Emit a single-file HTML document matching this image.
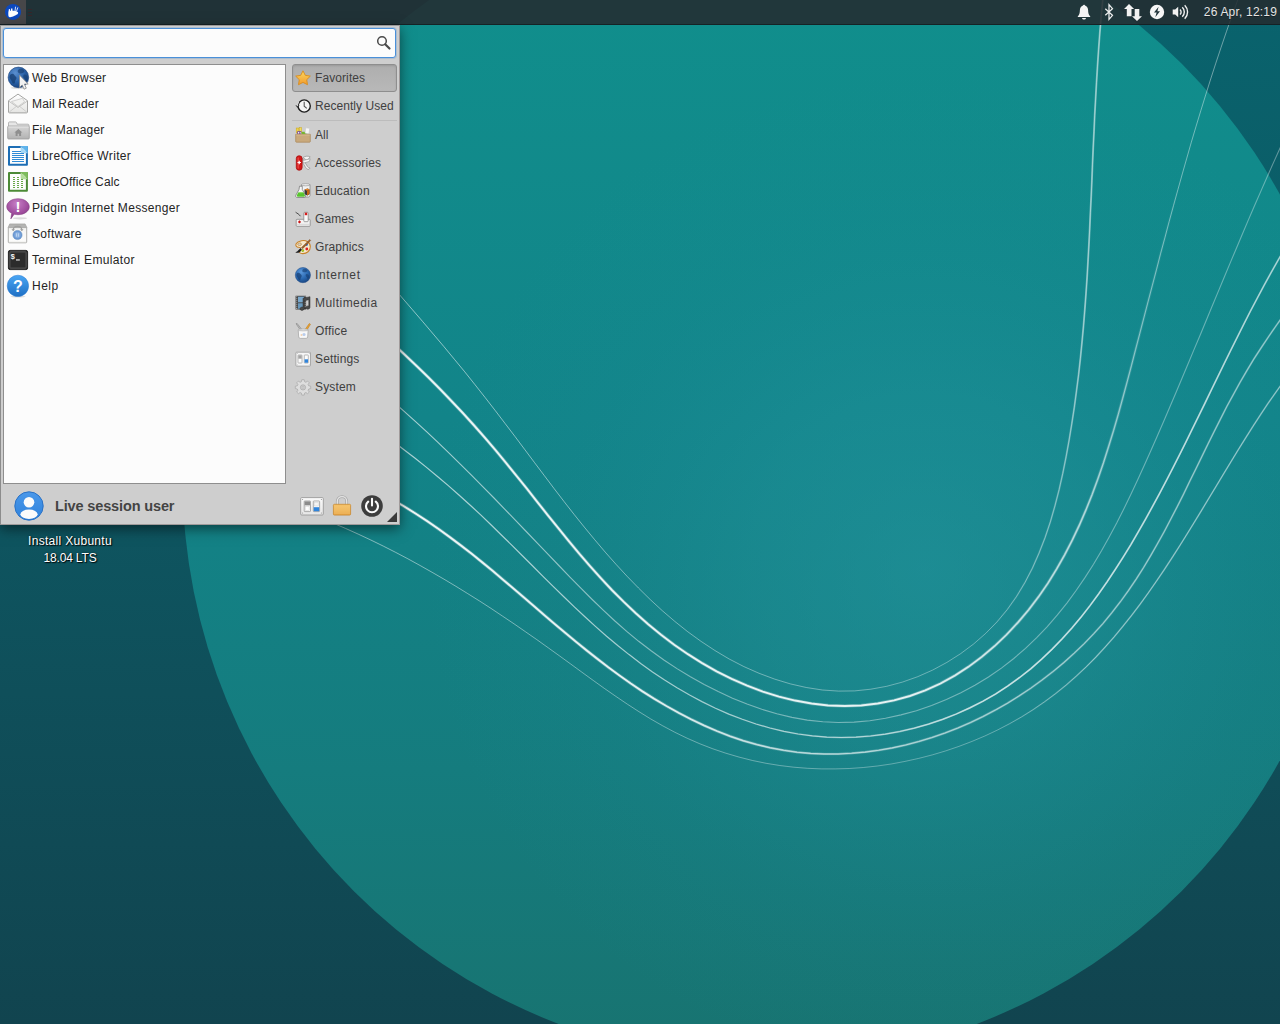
<!DOCTYPE html>
<html lang="en"><head><meta charset="utf-8"><title>Xubuntu Desktop</title>
<style>
html,body{margin:0;padding:0;}
body{width:1280px;height:1024px;overflow:hidden;position:relative;background:#0d5560;font-family:"Liberation Sans","DejaVu Sans",sans-serif;font-size:12px;color:#3c3c3c;}
#wall{position:absolute;left:0;top:0;}
.ic{position:absolute;overflow:visible;}
#panel{position:absolute;left:0;top:0;width:1280px;height:24px;background:rgba(36,43,47,0.87);border-bottom:1px solid rgba(20,30,34,0.85);}
#wbtn{position:absolute;left:0;top:0;width:26px;height:24px;background:#474749;}
#clock{position:absolute;right:3px;top:1px;height:24px;line-height:23px;text-shadow:0 1px 0 rgba(0,0,0,0.35);color:#e4e4e4;font-size:12px;letter-spacing:0.19px;white-space:nowrap;}
#menu{position:absolute;left:0;top:25px;width:398px;height:498px;background:#cecece;border:1px solid #a09a9a;border-top-color:#9a9a9a;border-left-color:#8c8c8c;box-shadow:0 4px 12px rgba(0,0,0,0.5);}
#search{position:absolute;left:3px;top:28px;width:391px;height:28px;background:#fcfcfc;border:1px solid #4a90d9;border-radius:3px;box-shadow:0 0 0 1px rgba(74,144,217,0.25);}
#list{position:absolute;left:3px;top:64px;width:281px;height:418px;background:#fcfcfc;border:1px solid #8e8e8e;}
.app{position:absolute;left:32px;height:26px;line-height:26px;white-space:nowrap;color:#242424;}
.cat{position:absolute;left:315px;height:28px;line-height:28px;white-space:nowrap;color:#404040;letter-spacing:0.1px;}
#fav{position:absolute;left:292px;top:64px;width:103px;height:26px;border:1px solid #8e8e8e;border-radius:3px;background:linear-gradient(#aeaeae,#b8b8b8);box-shadow:inset 0 1px 2px rgba(0,0,0,0.12);}
#sep{position:absolute;left:292px;top:120px;width:105px;height:1px;background:#bcbcbc;}
#user{position:absolute;left:55px;top:494px;height:24px;line-height:24px;font-weight:bold;font-size:14.5px;color:#444;white-space:nowrap;letter-spacing:-0.14px;}
.dl{position:absolute;left:0;width:140px;text-align:center;color:#fff;white-space:nowrap;text-shadow:1px 1px 1px rgba(0,0,0,0.9),0 0 2px rgba(0,0,0,0.6);}
</style></head><body>
<svg id="wall" width="1280" height="1024" viewBox="0 0 1280 1024">
<defs>
<linearGradient id="bgd" x1="0" y1="0" x2="0" y2="1"><stop offset="0" stop-color="#09636d"/><stop offset="0.5" stop-color="#0e5560"/><stop offset="1" stop-color="#11444f"/></linearGradient>
<linearGradient id="cg" x1="0" y1="0" x2="0" y2="1"><stop offset="0" stop-color="#10918d"/><stop offset="0.45" stop-color="#128489"/><stop offset="0.75" stop-color="#157c7e"/><stop offset="1" stop-color="#187370"/></linearGradient>
<radialGradient id="glow" gradientUnits="userSpaceOnUse" cx="925" cy="570" r="500"><stop offset="0" stop-color="#2a9ca8" stop-opacity="0.42"/><stop offset="0.35" stop-color="#2698a4" stop-opacity="0.30"/><stop offset="0.7" stop-color="#2090a0" stop-opacity="0.10"/><stop offset="1" stop-color="#1c8f9c" stop-opacity="0"/></radialGradient>
<linearGradient id="lg1_0" gradientUnits="userSpaceOnUse" x1="380" y1="0" x2="1280" y2="0"><stop offset="0.000" stop-color="#fff" stop-opacity="0.55"/><stop offset="0.356" stop-color="#fff" stop-opacity="0.4"/><stop offset="0.578" stop-color="#fff" stop-opacity="0.35"/><stop offset="1.000" stop-color="#fff" stop-opacity="0.4"/></linearGradient>
<linearGradient id="lg1_1" gradientUnits="userSpaceOnUse" x1="985" y1="0" x2="1110" y2="0"><stop offset="0.000" stop-color="#fff" stop-opacity="0"/><stop offset="0.600" stop-color="#fff" stop-opacity="0.2"/><stop offset="0.800" stop-color="#fff" stop-opacity="0.38"/><stop offset="1.000" stop-color="#fff" stop-opacity="0.38"/></linearGradient>
<linearGradient id="lg2_0" gradientUnits="userSpaceOnUse" x1="380" y1="0" x2="1280" y2="0"><stop offset="0.000" stop-color="#fff" stop-opacity="0.5"/><stop offset="1.000" stop-color="#fff" stop-opacity="0.4"/></linearGradient>
<linearGradient id="lg2_1" gradientUnits="userSpaceOnUse" x1="380" y1="0" x2="1180" y2="0"><stop offset="0.000" stop-color="#fff" stop-opacity="0.85"/><stop offset="0.650" stop-color="#fff" stop-opacity="0.8"/><stop offset="0.875" stop-color="#fff" stop-opacity="0.45"/><stop offset="0.950" stop-color="#fff" stop-opacity="0.12"/><stop offset="1.000" stop-color="#fff" stop-opacity="0"/></linearGradient>
<linearGradient id="lg2_2" gradientUnits="userSpaceOnUse" x1="380" y1="0" x2="1180" y2="0"><stop offset="0.000" stop-color="#fff" stop-opacity="0.25"/><stop offset="0.650" stop-color="#fff" stop-opacity="0.22"/><stop offset="0.875" stop-color="#fff" stop-opacity="0.1"/><stop offset="1.000" stop-color="#fff" stop-opacity="0"/></linearGradient>
<linearGradient id="lg3_0" gradientUnits="userSpaceOnUse" x1="380" y1="0" x2="1280" y2="0"><stop offset="0.000" stop-color="#fff" stop-opacity="0.65"/><stop offset="0.356" stop-color="#fff" stop-opacity="0.42"/><stop offset="1.000" stop-color="#fff" stop-opacity="0.35"/></linearGradient>
<linearGradient id="lg4_0" gradientUnits="userSpaceOnUse" x1="380" y1="0" x2="1280" y2="0"><stop offset="0.000" stop-color="#fff" stop-opacity="0.65"/><stop offset="1.000" stop-color="#fff" stop-opacity="0.5"/></linearGradient>
<linearGradient id="lg4_1" gradientUnits="userSpaceOnUse" x1="700" y1="0" x2="1280" y2="0"><stop offset="0.000" stop-color="#fff" stop-opacity="0"/><stop offset="0.345" stop-color="#fff" stop-opacity="0.3"/><stop offset="0.517" stop-color="#fff" stop-opacity="0.5"/><stop offset="0.862" stop-color="#fff" stop-opacity="0.45"/><stop offset="1.000" stop-color="#fff" stop-opacity="0.3"/></linearGradient>
<linearGradient id="lg5_0" gradientUnits="userSpaceOnUse" x1="380" y1="0" x2="1280" y2="0"><stop offset="0.000" stop-color="#fff" stop-opacity="0.55"/><stop offset="1.000" stop-color="#fff" stop-opacity="0.45"/></linearGradient>
<linearGradient id="lg5_1" gradientUnits="userSpaceOnUse" x1="380" y1="0" x2="1280" y2="0"><stop offset="0.000" stop-color="#fff" stop-opacity="0.85"/><stop offset="0.289" stop-color="#fff" stop-opacity="0.75"/><stop offset="0.467" stop-color="#fff" stop-opacity="0.4"/><stop offset="0.689" stop-color="#fff" stop-opacity="0.25"/><stop offset="0.800" stop-color="#fff" stop-opacity="0.18"/><stop offset="1.000" stop-color="#fff" stop-opacity="0.2"/></linearGradient>
<linearGradient id="lg5_2" gradientUnits="userSpaceOnUse" x1="380" y1="0" x2="1280" y2="0"><stop offset="0.000" stop-color="#fff" stop-opacity="0.25"/><stop offset="0.289" stop-color="#fff" stop-opacity="0.2"/><stop offset="0.467" stop-color="#fff" stop-opacity="0.05"/><stop offset="1.000" stop-color="#fff" stop-opacity="0"/></linearGradient>
<linearGradient id="lg6_0" gradientUnits="userSpaceOnUse" x1="320" y1="0" x2="1280" y2="0"><stop offset="0.000" stop-color="#fff" stop-opacity="0.55"/><stop offset="0.396" stop-color="#fff" stop-opacity="0.4"/><stop offset="0.604" stop-color="#fff" stop-opacity="0.35"/><stop offset="1.000" stop-color="#fff" stop-opacity="0.4"/></linearGradient>
<linearGradient id="lg6_1" gradientUnits="userSpaceOnUse" x1="1000" y1="0" x2="1280" y2="0"><stop offset="0.000" stop-color="#fff" stop-opacity="0"/><stop offset="0.357" stop-color="#fff" stop-opacity="0.3"/><stop offset="1.000" stop-color="#fff" stop-opacity="0.3"/></linearGradient>
</defs>
<rect width="1280" height="1024" fill="url(#bgd)"/>
<circle cx="767.7" cy="477.4" r="585.2" fill="url(#cg)"/>
<circle cx="767.7" cy="477.4" r="585.2" fill="url(#glow)"/>
<path d="M379.6,272.3 L390.5,284.5 L401.3,296.8 L412.0,309.2 L422.7,321.6 L433.3,334.1 L443.9,346.6 L454.4,359.3 L464.8,371.9 L475.0,384.7 L485.2,397.6 L495.2,410.5 L505.1,423.5 L515.0,436.5 L524.8,449.6 L534.6,462.7 L544.4,475.7 L554.2,488.7 L564.1,501.6 L574.1,514.4 L584.3,527.1 L594.7,539.7 L605.2,552.1 L616.0,564.3 L627.1,576.3 L638.5,588.0 L650.2,599.5 L662.3,610.7 L674.8,621.4 L687.7,631.7 L701.1,641.4 L714.9,650.5 L729.2,659.0 L743.9,666.6 L759.1,673.3 L774.6,679.1 L790.4,683.9 L806.3,687.5 L822.4,690.0 L838.6,691.1 L854.7,690.9 L870.8,689.2 L886.7,686.3 L902.4,682.1 L917.7,676.7 L932.6,670.1 L946.9,662.4 L960.6,653.7 L973.6,644.0 L985.7,633.4 L997.0,621.9 L1007.3,609.5 L1016.6,596.4 L1024.9,582.6 L1032.4,568.2 L1039.0,553.2 L1045.0,537.8 L1050.3,522.0 L1054.9,506.0 L1059.1,489.7 L1062.8,473.2 L1066.1,456.7 L1069.1,440.2 L1071.8,423.7 L1074.3,407.3 L1076.5,390.9 L1078.6,374.6 L1080.4,358.3 L1082.0,342.1 L1083.5,325.8 L1084.8,309.7 L1086.0,293.5 L1087.1,277.3 L1088.0,261.2 L1088.9,245.0 L1089.7,228.9 L1090.4,212.7 L1091.2,196.5 L1091.9,180.3 L1092.5,164.1 L1093.2,147.9 L1094.0,131.6 L1094.7,115.3 L1095.6,99.0 L1096.5,82.6 L1097.5,66.1 L1098.6,49.6 L1099.8,33.1 L1101.2,16.4 L1102.8,-0.3" fill="none" stroke="url(#lg1_0)" stroke-width="1.0"/>
<path d="M379.6,272.3 L390.5,284.5 L401.3,296.8 L412.0,309.2 L422.7,321.6 L433.3,334.1 L443.9,346.6 L454.4,359.3 L464.8,371.9 L475.0,384.7 L485.2,397.6 L495.2,410.5 L505.1,423.5 L515.0,436.5 L524.8,449.6 L534.6,462.7 L544.4,475.7 L554.2,488.7 L564.1,501.6 L574.1,514.4 L584.3,527.1 L594.7,539.7 L605.2,552.1 L616.0,564.3 L627.1,576.3 L638.5,588.0 L650.2,599.5 L662.3,610.7 L674.8,621.4 L687.7,631.7 L701.1,641.4 L714.9,650.5 L729.2,659.0 L743.9,666.6 L759.1,673.3 L774.6,679.1 L790.4,683.9 L806.3,687.5 L822.4,690.0 L838.6,691.1 L854.7,690.9 L870.8,689.2 L886.7,686.3 L902.4,682.1 L917.7,676.7 L932.6,670.1 L946.9,662.4 L960.6,653.7 L973.6,644.0 L985.7,633.4 L997.0,621.9 L1007.3,609.5 L1016.6,596.4 L1024.9,582.6 L1032.4,568.2 L1039.0,553.2 L1045.0,537.8 L1050.3,522.0 L1054.9,506.0 L1059.1,489.7 L1062.8,473.2 L1066.1,456.7 L1069.1,440.2 L1071.8,423.7 L1074.3,407.3 L1076.5,390.9 L1078.6,374.6 L1080.4,358.3 L1082.0,342.1 L1083.5,325.8 L1084.8,309.7 L1086.0,293.5 L1087.1,277.3 L1088.0,261.2 L1088.9,245.0 L1089.7,228.9 L1090.4,212.7 L1091.2,196.5 L1091.9,180.3 L1092.5,164.1 L1093.2,147.9 L1094.0,131.6 L1094.7,115.3 L1095.6,99.0 L1096.5,82.6 L1097.5,66.1 L1098.6,49.6 L1099.8,33.1 L1101.2,16.4 L1102.8,-0.3" fill="none" stroke="url(#lg1_1)" stroke-width="1.9"/>
<path d="M379.5,331.5 L391.8,342.7 L404.0,354.0 L416.1,365.4 L428.0,377.0 L439.7,388.8 L451.2,400.7 L462.6,412.8 L473.7,425.0 L484.7,437.5 L495.5,450.1 L506.0,462.9 L516.5,475.8 L526.9,488.7 L537.2,501.8 L547.5,514.8 L557.9,527.7 L568.4,540.6 L579.0,553.3 L589.8,565.8 L600.8,578.1 L612.1,590.2 L623.8,601.9 L635.8,613.3 L648.2,624.2 L661.0,634.7 L674.2,644.8 L687.9,654.2 L702.1,663.1 L716.6,671.4 L731.7,678.9 L747.1,685.6 L762.8,691.6 L778.9,696.6 L795.1,700.6 L811.6,703.6 L828.1,705.4 L844.7,706.0 L861.3,705.4 L877.7,703.5 L894.0,700.4 L909.9,696.0 L925.3,690.4 L940.3,683.6 L954.8,675.6 L968.6,666.7 L981.9,656.8 L994.6,646.1 L1006.6,634.6 L1017.9,622.5 L1028.6,609.9 L1038.6,596.7 L1047.9,583.2 L1056.5,569.2 L1064.6,554.9 L1072.2,540.3 L1079.3,525.3 L1085.9,510.0 L1092.1,494.6 L1097.9,478.9 L1103.4,463.0 L1108.5,446.9 L1113.5,430.8 L1118.2,414.6 L1122.7,398.3 L1127.1,382.0 L1131.4,365.8 L1135.6,349.5 L1139.8,333.4 L1144.0,317.3 L1148.2,301.2 L1152.4,285.2 L1156.6,269.2 L1160.7,253.2 L1165.0,237.3 L1169.2,221.4 L1173.5,205.6 L1177.9,189.7 L1182.3,173.9 L1186.8,158.1 L1191.3,142.3 L1196.0,126.5 L1200.8,110.7 L1205.7,94.9 L1210.7,79.0 L1215.8,63.2 L1221.1,47.3 L1226.5,31.4 L1232.1,15.5 L1237.9,-0.4" fill="none" stroke="url(#lg2_0)" stroke-width="1.0"/>
<path d="M379.5,331.5 L391.8,342.7 L404.0,354.0 L416.1,365.4 L428.0,377.0 L439.7,388.8 L451.2,400.7 L462.6,412.8 L473.7,425.0 L484.7,437.5 L495.5,450.1 L506.0,462.9 L516.5,475.8 L526.9,488.7 L537.2,501.8 L547.5,514.8 L557.9,527.7 L568.4,540.6 L579.0,553.3 L589.8,565.8 L600.8,578.1 L612.1,590.2 L623.8,601.9 L635.8,613.3 L648.2,624.2 L661.0,634.7 L674.2,644.8 L687.9,654.2 L702.1,663.1 L716.6,671.4 L731.7,678.9 L747.1,685.6 L762.8,691.6 L778.9,696.6 L795.1,700.6 L811.6,703.6 L828.1,705.4 L844.7,706.0 L861.3,705.4 L877.7,703.5 L894.0,700.4 L909.9,696.0 L925.3,690.4 L940.3,683.6 L954.8,675.6 L968.6,666.7 L981.9,656.8 L994.6,646.1 L1006.6,634.6 L1017.9,622.5 L1028.6,609.9 L1038.6,596.7 L1047.9,583.2 L1056.5,569.2 L1064.6,554.9 L1072.2,540.3 L1079.3,525.3 L1085.9,510.0 L1092.1,494.6 L1097.9,478.9 L1103.4,463.0 L1108.5,446.9 L1113.5,430.8 L1118.2,414.6 L1122.7,398.3 L1127.1,382.0 L1131.4,365.8 L1135.6,349.5 L1139.8,333.4 L1144.0,317.3 L1148.2,301.2 L1152.4,285.2 L1156.6,269.2 L1160.7,253.2 L1165.0,237.3 L1169.2,221.4 L1173.5,205.6 L1177.9,189.7 L1182.3,173.9 L1186.8,158.1 L1191.3,142.3 L1196.0,126.5 L1200.8,110.7 L1205.7,94.9 L1210.7,79.0 L1215.8,63.2 L1221.1,47.3 L1226.5,31.4 L1232.1,15.5 L1237.9,-0.4" fill="none" stroke="url(#lg2_1)" stroke-width="2.0"/>
<path d="M379.5,331.5 L391.8,342.7 L404.0,354.0 L416.1,365.4 L428.0,377.0 L439.7,388.8 L451.2,400.7 L462.6,412.8 L473.7,425.0 L484.7,437.5 L495.5,450.1 L506.0,462.9 L516.5,475.8 L526.9,488.7 L537.2,501.8 L547.5,514.8 L557.9,527.7 L568.4,540.6 L579.0,553.3 L589.8,565.8 L600.8,578.1 L612.1,590.2 L623.8,601.9 L635.8,613.3 L648.2,624.2 L661.0,634.7 L674.2,644.8 L687.9,654.2 L702.1,663.1 L716.6,671.4 L731.7,678.9 L747.1,685.6 L762.8,691.6 L778.9,696.6 L795.1,700.6 L811.6,703.6 L828.1,705.4 L844.7,706.0 L861.3,705.4 L877.7,703.5 L894.0,700.4 L909.9,696.0 L925.3,690.4 L940.3,683.6 L954.8,675.6 L968.6,666.7 L981.9,656.8 L994.6,646.1 L1006.6,634.6 L1017.9,622.5 L1028.6,609.9 L1038.6,596.7 L1047.9,583.2 L1056.5,569.2 L1064.6,554.9 L1072.2,540.3 L1079.3,525.3 L1085.9,510.0 L1092.1,494.6 L1097.9,478.9 L1103.4,463.0 L1108.5,446.9 L1113.5,430.8 L1118.2,414.6 L1122.7,398.3 L1127.1,382.0 L1131.4,365.8 L1135.6,349.5 L1139.8,333.4 L1144.0,317.3 L1148.2,301.2 L1152.4,285.2 L1156.6,269.2 L1160.7,253.2 L1165.0,237.3 L1169.2,221.4 L1173.5,205.6 L1177.9,189.7 L1182.3,173.9 L1186.8,158.1 L1191.3,142.3 L1196.0,126.5 L1200.8,110.7 L1205.7,94.9 L1210.7,79.0 L1215.8,63.2 L1221.1,47.3 L1226.5,31.4 L1232.1,15.5 L1237.9,-0.4" fill="none" stroke="url(#lg2_2)" stroke-width="3.4"/>
<path d="M379.9,390.1 L391.8,400.4 L403.6,410.8 L415.3,421.3 L426.8,431.9 L438.2,442.7 L449.6,453.6 L460.8,464.6 L471.9,475.7 L483.0,486.8 L494.0,498.0 L504.9,509.3 L515.8,520.6 L526.7,532.0 L537.6,543.3 L548.4,554.6 L559.3,566.0 L570.2,577.3 L581.1,588.4 L592.2,599.5 L603.5,610.4 L614.9,621.0 L626.7,631.3 L638.7,641.3 L651.1,650.8 L663.9,660.0 L677.0,668.6 L690.4,676.8 L704.2,684.5 L718.2,691.6 L732.5,698.2 L747.0,704.1 L761.8,709.3 L776.8,713.8 L792.0,717.4 L807.3,720.1 L822.8,721.8 L838.4,722.5 L854.1,722.1 L869.8,720.7 L885.5,718.3 L901.0,714.9 L916.4,710.7 L931.6,705.5 L946.4,699.5 L960.9,692.7 L974.9,685.2 L988.5,677.0 L1001.4,668.1 L1013.8,658.5 L1025.5,648.4 L1036.7,637.7 L1047.3,626.6 L1057.4,614.9 L1067.1,602.8 L1076.3,590.3 L1085.1,577.4 L1093.5,564.2 L1101.5,550.7 L1109.2,536.9 L1116.7,523.0 L1123.9,508.8 L1130.8,494.5 L1137.6,480.1 L1144.2,465.6 L1150.7,451.0 L1157.1,436.5 L1163.4,422.0 L1169.6,407.5 L1175.8,393.0 L1181.9,378.5 L1188.0,364.0 L1194.0,349.6 L1200.1,335.2 L1206.1,320.7 L1212.1,306.3 L1218.1,291.9 L1224.1,277.5 L1230.1,263.1 L1236.2,248.7 L1242.3,234.3 L1248.4,219.9 L1254.6,205.5 L1260.9,191.1 L1267.2,176.7 L1273.6,162.4 L1280.1,148.0 L1286.7,133.6 L1293.4,119.2 L1300.3,104.8" fill="none" stroke="url(#lg3_0)" stroke-width="1.1"/>
<path d="M379.7,431.3 L391.4,440.0 L403.0,448.9 L414.5,457.8 L425.9,466.9 L437.2,476.2 L448.3,485.6 L459.2,495.2 L470.0,505.0 L480.7,514.9 L491.2,525.0 L501.6,535.2 L512.0,545.4 L522.4,555.7 L532.7,566.0 L543.0,576.3 L553.4,586.6 L563.8,596.8 L574.3,606.9 L584.9,616.8 L595.7,626.6 L606.6,636.2 L617.7,645.5 L629.1,654.6 L640.7,663.4 L652.5,671.9 L664.6,680.0 L677.0,687.8 L689.6,695.1 L702.4,701.9 L715.5,708.3 L728.8,714.1 L742.3,719.3 L756.0,724.0 L769.9,728.0 L783.9,731.3 L798.1,734.0 L812.4,735.9 L826.8,737.1 L841.4,737.5 L856.0,737.2 L870.6,736.0 L885.3,734.1 L899.8,731.5 L914.3,728.1 L928.5,724.1 L942.6,719.4 L956.3,714.0 L969.8,707.9 L982.9,701.3 L995.6,694.0 L1007.8,686.1 L1019.5,677.6 L1030.8,668.7 L1041.6,659.2 L1052.1,649.2 L1062.1,638.9 L1071.8,628.1 L1081.1,617.0 L1090.1,605.5 L1098.7,593.8 L1107.1,581.8 L1115.2,569.6 L1123.1,557.2 L1130.8,544.7 L1138.2,532.0 L1145.5,519.3 L1152.5,506.5 L1159.5,493.6 L1166.3,480.7 L1173.0,467.7 L1179.6,454.7 L1186.1,441.7 L1192.5,428.6 L1198.9,415.6 L1205.3,402.5 L1211.6,389.4 L1218.0,376.3 L1224.4,363.2 L1230.8,350.2 L1237.3,337.2 L1243.8,324.2 L1250.4,311.2 L1257.2,298.3 L1264.0,285.5 L1271.0,272.7 L1278.2,260.0 L1285.5,247.3 L1293.0,234.8 L1300.8,222.3" fill="none" stroke="url(#lg4_0)" stroke-width="1.2"/>
<path d="M379.7,431.3 L391.4,440.0 L403.0,448.9 L414.5,457.8 L425.9,466.9 L437.2,476.2 L448.3,485.6 L459.2,495.2 L470.0,505.0 L480.7,514.9 L491.2,525.0 L501.6,535.2 L512.0,545.4 L522.4,555.7 L532.7,566.0 L543.0,576.3 L553.4,586.6 L563.8,596.8 L574.3,606.9 L584.9,616.8 L595.7,626.6 L606.6,636.2 L617.7,645.5 L629.1,654.6 L640.7,663.4 L652.5,671.9 L664.6,680.0 L677.0,687.8 L689.6,695.1 L702.4,701.9 L715.5,708.3 L728.8,714.1 L742.3,719.3 L756.0,724.0 L769.9,728.0 L783.9,731.3 L798.1,734.0 L812.4,735.9 L826.8,737.1 L841.4,737.5 L856.0,737.2 L870.6,736.0 L885.3,734.1 L899.8,731.5 L914.3,728.1 L928.5,724.1 L942.6,719.4 L956.3,714.0 L969.8,707.9 L982.9,701.3 L995.6,694.0 L1007.8,686.1 L1019.5,677.6 L1030.8,668.7 L1041.6,659.2 L1052.1,649.2 L1062.1,638.9 L1071.8,628.1 L1081.1,617.0 L1090.1,605.5 L1098.7,593.8 L1107.1,581.8 L1115.2,569.6 L1123.1,557.2 L1130.8,544.7 L1138.2,532.0 L1145.5,519.3 L1152.5,506.5 L1159.5,493.6 L1166.3,480.7 L1173.0,467.7 L1179.6,454.7 L1186.1,441.7 L1192.5,428.6 L1198.9,415.6 L1205.3,402.5 L1211.6,389.4 L1218.0,376.3 L1224.4,363.2 L1230.8,350.2 L1237.3,337.2 L1243.8,324.2 L1250.4,311.2 L1257.2,298.3 L1264.0,285.5 L1271.0,272.7 L1278.2,260.0 L1285.5,247.3 L1293.0,234.8 L1300.8,222.3" fill="none" stroke="url(#lg4_1)" stroke-width="1.8"/>
<path d="M378.6,492.1 L391.2,498.9 L403.5,506.0 L415.5,513.5 L427.2,521.1 L438.6,529.0 L449.8,537.1 L460.8,545.4 L471.7,553.8 L482.3,562.4 L492.9,571.1 L503.3,579.9 L513.7,588.7 L524.0,597.6 L534.4,606.5 L544.7,615.4 L555.0,624.3 L565.5,633.1 L576.0,641.8 L586.6,650.4 L597.4,658.9 L608.3,667.3 L619.5,675.5 L630.8,683.5 L642.4,691.3 L654.3,698.8 L666.4,706.0 L678.8,712.9 L691.3,719.4 L704.1,725.5 L717.0,731.1 L730.1,736.2 L743.3,740.7 L756.6,744.5 L770.1,747.8 L783.6,750.3 L797.1,752.2 L810.7,753.4 L824.3,754.0 L838.0,754.0 L851.6,753.3 L865.2,752.1 L878.7,750.3 L892.2,747.9 L905.6,745.0 L918.8,741.5 L932.0,737.5 L945.0,733.0 L957.9,728.0 L970.6,722.5 L983.1,716.5 L995.4,710.0 L1007.5,703.2 L1019.3,695.8 L1030.9,688.1 L1042.2,679.9 L1053.2,671.4 L1063.9,662.5 L1074.2,653.2 L1084.2,643.6 L1093.8,633.6 L1103.1,623.3 L1111.9,612.7 L1120.4,601.7 L1128.4,590.6 L1136.2,579.1 L1143.6,567.5 L1150.7,555.6 L1157.6,543.6 L1164.3,531.4 L1170.8,519.1 L1177.2,506.7 L1183.5,494.2 L1189.6,481.6 L1195.8,469.1 L1201.9,456.5 L1208.0,443.9 L1214.2,431.4 L1220.5,419.0 L1226.8,406.6 L1233.4,394.4 L1240.1,382.3 L1247.0,370.4 L1254.1,358.6 L1261.6,347.1 L1269.2,335.7 L1277.0,324.5 L1285.0,313.3 L1293.1,302.1 L1301.1,291.0" fill="none" stroke="url(#lg5_0)" stroke-width="1.1"/>
<path d="M378.6,492.1 L391.2,498.9 L403.5,506.0 L415.5,513.5 L427.2,521.1 L438.6,529.0 L449.8,537.1 L460.8,545.4 L471.7,553.8 L482.3,562.4 L492.9,571.1 L503.3,579.9 L513.7,588.7 L524.0,597.6 L534.4,606.5 L544.7,615.4 L555.0,624.3 L565.5,633.1 L576.0,641.8 L586.6,650.4 L597.4,658.9 L608.3,667.3 L619.5,675.5 L630.8,683.5 L642.4,691.3 L654.3,698.8 L666.4,706.0 L678.8,712.9 L691.3,719.4 L704.1,725.5 L717.0,731.1 L730.1,736.2 L743.3,740.7 L756.6,744.5 L770.1,747.8 L783.6,750.3 L797.1,752.2 L810.7,753.4 L824.3,754.0 L838.0,754.0 L851.6,753.3 L865.2,752.1 L878.7,750.3 L892.2,747.9 L905.6,745.0 L918.8,741.5 L932.0,737.5 L945.0,733.0 L957.9,728.0 L970.6,722.5 L983.1,716.5 L995.4,710.0 L1007.5,703.2 L1019.3,695.8 L1030.9,688.1 L1042.2,679.9 L1053.2,671.4 L1063.9,662.5 L1074.2,653.2 L1084.2,643.6 L1093.8,633.6 L1103.1,623.3 L1111.9,612.7 L1120.4,601.7 L1128.4,590.6 L1136.2,579.1 L1143.6,567.5 L1150.7,555.6 L1157.6,543.6 L1164.3,531.4 L1170.8,519.1 L1177.2,506.7 L1183.5,494.2 L1189.6,481.6 L1195.8,469.1 L1201.9,456.5 L1208.0,443.9 L1214.2,431.4 L1220.5,419.0 L1226.8,406.6 L1233.4,394.4 L1240.1,382.3 L1247.0,370.4 L1254.1,358.6 L1261.6,347.1 L1269.2,335.7 L1277.0,324.5 L1285.0,313.3 L1293.1,302.1 L1301.1,291.0" fill="none" stroke="url(#lg5_1)" stroke-width="2.0"/>
<path d="M378.6,492.1 L391.2,498.9 L403.5,506.0 L415.5,513.5 L427.2,521.1 L438.6,529.0 L449.8,537.1 L460.8,545.4 L471.7,553.8 L482.3,562.4 L492.9,571.1 L503.3,579.9 L513.7,588.7 L524.0,597.6 L534.4,606.5 L544.7,615.4 L555.0,624.3 L565.5,633.1 L576.0,641.8 L586.6,650.4 L597.4,658.9 L608.3,667.3 L619.5,675.5 L630.8,683.5 L642.4,691.3 L654.3,698.8 L666.4,706.0 L678.8,712.9 L691.3,719.4 L704.1,725.5 L717.0,731.1 L730.1,736.2 L743.3,740.7 L756.6,744.5 L770.1,747.8 L783.6,750.3 L797.1,752.2 L810.7,753.4 L824.3,754.0 L838.0,754.0 L851.6,753.3 L865.2,752.1 L878.7,750.3 L892.2,747.9 L905.6,745.0 L918.8,741.5 L932.0,737.5 L945.0,733.0 L957.9,728.0 L970.6,722.5 L983.1,716.5 L995.4,710.0 L1007.5,703.2 L1019.3,695.8 L1030.9,688.1 L1042.2,679.9 L1053.2,671.4 L1063.9,662.5 L1074.2,653.2 L1084.2,643.6 L1093.8,633.6 L1103.1,623.3 L1111.9,612.7 L1120.4,601.7 L1128.4,590.6 L1136.2,579.1 L1143.6,567.5 L1150.7,555.6 L1157.6,543.6 L1164.3,531.4 L1170.8,519.1 L1177.2,506.7 L1183.5,494.2 L1189.6,481.6 L1195.8,469.1 L1201.9,456.5 L1208.0,443.9 L1214.2,431.4 L1220.5,419.0 L1226.8,406.6 L1233.4,394.4 L1240.1,382.3 L1247.0,370.4 L1254.1,358.6 L1261.6,347.1 L1269.2,335.7 L1277.0,324.5 L1285.0,313.3 L1293.1,302.1 L1301.1,291.0" fill="none" stroke="url(#lg5_2)" stroke-width="3.4"/>
<path d="M319.6,517.6 L332.6,522.9 L345.5,528.4 L358.2,534.1 L370.8,540.0 L383.3,546.1 L395.7,552.4 L407.9,558.8 L420.1,565.5 L432.1,572.3 L444.0,579.2 L455.9,586.3 L467.7,593.6 L479.4,600.9 L491.0,608.4 L502.5,616.1 L514.0,623.8 L525.4,631.7 L536.8,639.6 L548.1,647.7 L559.4,655.8 L570.7,664.0 L581.9,672.2 L593.2,680.4 L604.5,688.5 L615.9,696.4 L627.4,704.2 L639.0,711.7 L650.8,719.0 L662.7,725.8 L674.9,732.3 L687.3,738.3 L699.9,743.8 L712.8,748.8 L725.8,753.2 L739.1,757.1 L752.5,760.5 L766.1,763.3 L779.8,765.5 L793.6,767.2 L807.5,768.3 L821.4,768.9 L835.4,768.9 L849.4,768.5 L863.4,767.5 L877.4,766.0 L891.2,764.0 L905.0,761.4 L918.7,758.4 L932.3,754.9 L945.7,750.9 L958.9,746.4 L972.0,741.4 L984.8,736.0 L997.3,730.1 L1009.6,723.7 L1021.6,716.9 L1033.2,709.6 L1044.5,701.8 L1055.5,693.7 L1066.1,685.1 L1076.3,676.1 L1086.3,666.8 L1095.9,657.1 L1105.2,647.0 L1114.3,636.7 L1123.1,626.1 L1131.7,615.3 L1140.1,604.2 L1148.3,592.9 L1156.3,581.4 L1164.2,569.8 L1171.9,558.0 L1179.5,546.1 L1187.0,534.1 L1194.4,522.1 L1201.8,510.0 L1209.1,497.9 L1216.4,485.8 L1223.6,473.8 L1230.9,461.8 L1238.2,449.8 L1245.6,438.0 L1253.0,426.3 L1260.5,414.7 L1268.1,403.3 L1275.9,392.2 L1283.8,381.2 L1291.8,370.5 L1300.0,360.0" fill="none" stroke="url(#lg6_0)" stroke-width="0.9"/>
<path d="M319.6,517.6 L332.6,522.9 L345.5,528.4 L358.2,534.1 L370.8,540.0 L383.3,546.1 L395.7,552.4 L407.9,558.8 L420.1,565.5 L432.1,572.3 L444.0,579.2 L455.9,586.3 L467.7,593.6 L479.4,600.9 L491.0,608.4 L502.5,616.1 L514.0,623.8 L525.4,631.7 L536.8,639.6 L548.1,647.7 L559.4,655.8 L570.7,664.0 L581.9,672.2 L593.2,680.4 L604.5,688.5 L615.9,696.4 L627.4,704.2 L639.0,711.7 L650.8,719.0 L662.7,725.8 L674.9,732.3 L687.3,738.3 L699.9,743.8 L712.8,748.8 L725.8,753.2 L739.1,757.1 L752.5,760.5 L766.1,763.3 L779.8,765.5 L793.6,767.2 L807.5,768.3 L821.4,768.9 L835.4,768.9 L849.4,768.5 L863.4,767.5 L877.4,766.0 L891.2,764.0 L905.0,761.4 L918.7,758.4 L932.3,754.9 L945.7,750.9 L958.9,746.4 L972.0,741.4 L984.8,736.0 L997.3,730.1 L1009.6,723.7 L1021.6,716.9 L1033.2,709.6 L1044.5,701.8 L1055.5,693.7 L1066.1,685.1 L1076.3,676.1 L1086.3,666.8 L1095.9,657.1 L1105.2,647.0 L1114.3,636.7 L1123.1,626.1 L1131.7,615.3 L1140.1,604.2 L1148.3,592.9 L1156.3,581.4 L1164.2,569.8 L1171.9,558.0 L1179.5,546.1 L1187.0,534.1 L1194.4,522.1 L1201.8,510.0 L1209.1,497.9 L1216.4,485.8 L1223.6,473.8 L1230.9,461.8 L1238.2,449.8 L1245.6,438.0 L1253.0,426.3 L1260.5,414.7 L1268.1,403.3 L1275.9,392.2 L1283.8,381.2 L1291.8,370.5 L1300.0,360.0" fill="none" stroke="url(#lg6_1)" stroke-width="1.6"/>

</svg>
<div id="panel"></div>
<div id="wbtn"></div>
<svg class="ic" style="left:4px;top:3px" width="18" height="18" viewBox="0 0 18 18">
<circle cx="9" cy="8.950" r="8" fill="#0c48be"/>
<path d="M4.300 10C4.300 8.500 4.900 7.800 4.800 6.300L5.900 6 6.300 8.100 6.900 7.800 7.200 5.400 8.200 5.200 8.700 7.900C10 7.600 11.500 7.800 12.500 8.300 13.600 8.800 14.300 9.400 14.100 10.200 13.700 11.500 11.500 12.300 10 13 8.500 13.700 6.500 14.600 5.200 14 4.200 13.500 4.300 11.500 4.300 10Z" fill="#fff"/>
<path d="M11.100 7.600L11.500 4.100M12.700 7.800L13.700 4.800" stroke="#e8f0ff" stroke-width="0.900" stroke-linecap="round"/>
</svg>
<svg class="ic" style="left:28px;top:9px" width="4" height="9" viewBox="0 0 4 9"><rect x="0" y="0" width="4" height="1" fill="#36262a"/><rect x="0" y="3" width="4" height="1" fill="#36262a"/><rect x="0" y="6" width="4" height="1" fill="#36262a"/></svg>
<svg class="ic" style="left:1076px;top:4px" width="16" height="16" viewBox="0 0 16 16">
<path d="M8 .7c.6 0 1 .4 1 .9 2 .6 3 2.300 3.100 4.400 0 3 .6 5 2.100 6.300v.7H1.800v-.7C3.300 11 3.900 9 3.900 6c.1-2.100 1.100-3.800 3.100-4.400 0-.5.400-.9 1-.9z" fill="#f4f4f4"/>
<path d="M6 14h4c-.2 1-1 1.600-2 1.600S6.200 15 6 14z" fill="#f4f4f4"/>
</svg>
<svg class="ic" style="left:1101px;top:4px" width="16" height="16" viewBox="0 0 16 16">
<path d="M4.300 4.700l7.200 6.600L8 15.300V.7l3.500 4-7.200 6.600" fill="none" stroke="#f0f0f0" stroke-width="1.250" stroke-linejoin="miter"/>
</svg>
<svg class="ic" style="left:1124px;top:4px" width="18" height="18" viewBox="0 0 18 18">
<path d="M5 0l5.100 5H7.500v7.200H2.800V5H0z" fill="#f2f2f2"/>
<path d="M13 17.100l-5-4.900h2.700V5h4.600v7.200H18z" fill="#f2f2f2"/>
</svg>
<svg class="ic" style="left:1149px;top:4px" width="16" height="16" viewBox="0 0 16 16">
<circle cx="8" cy="8" r="7.200" fill="#f6f6f6"/>
<path d="M9.600 2.800L5 8.600h2.600L6.300 13.200 11 7.300H8.400z" fill="#22343a"/>
</svg>
<svg class="ic" style="left:1172px;top:4px" width="17" height="17" viewBox="0 0 17 17">
<path d="M.7 5.600h2.500L6.200 2.800v10.400L3.200 10.400H.7z" fill="#f2f2f2"/>
<path d="M8 5.400a3.600 3.600 0 0 1 0 5.200" fill="none" stroke="#f2f2f2" stroke-width="1.400"/>
<path d="M10.300 3.300a6.500 6.500 0 0 1 0 9.400" fill="none" stroke="#f2f2f2" stroke-width="1.400"/>
<path d="M12.700 1.200a9.500 9.500 0 0 1 0 13.600" fill="none" stroke="#f2f2f2" stroke-width="1.400"/>
</svg>
<div id="clock">26 Apr, 12:19</div>
<div id="menu"></div>
<div id="search"></div>
<svg class="ic" style="left:376px;top:35px" width="15" height="15" viewBox="0 0 15 15">
<circle cx="6" cy="6" r="4.300" fill="none" stroke="#4a4a4a" stroke-width="1.500"/>
<path d="M9.200 9.200l4.300 4.300" stroke="#4a4a4a" stroke-width="2.200" stroke-linecap="round"/>
</svg>
<div id="list"></div>
<svg class="ic" style="left:6px;top:66px" width="24" height="24" viewBox="0 0 24 24">
<defs><radialGradient id="gl0" cx="0.35" cy="0.28" r="0.8"><stop offset="0" stop-color="#5b8fcf"/><stop offset="0.55" stop-color="#2a62a8"/><stop offset="1" stop-color="#163f78"/></radialGradient></defs>
<ellipse cx="12.500" cy="21.800" rx="8" ry="1.300" fill="#000" opacity="0.120"/>
<circle cx="12.400" cy="11.400" r="10.300" fill="url(#gl0)" stroke="#1a4079" stroke-width="0.600"/>
<path d="M4.500 8.500c1.500-1 3-.8 3.800.5.600 1.200 2.200 1.500 2.200 3 0 1.500-1.500 2.200-1.500 3.800 0 1-.5 2-1.500 2-1.300-.6-1.500-2.200-2.200-3.400-.8-1.200-2-2.300-1.800-3.800.1-.9.400-1.600 1-2.100z" fill="#173d70" opacity="0.750"/>
<path d="M13 3.200c1.600-.8 3.800-.4 5 1 .8 1 .3 2.200-.8 2.500-1.300.300-2.200 1.200-3.500.8-1.200-.4-2.200-1.300-2-2.500.1-.8.600-1.400 1.300-1.800z" fill="#173d70" opacity="0.650"/>
<path d="M18.500 8.500c1.300-.2 2.700.8 3 2.200.3 1.700-.3 3.500-1.400 4.800-.8-.6-.6-1.800-1.200-2.600-.6-.9-1.700-1.400-1.700-2.500 0-.9.500-1.700 1.300-1.900z" fill="#173d70" opacity="0.600"/>
<path d="M13.500 9.100v12.400l2.700-2.500 1.900 4.200 2.200-1-1.900-4.100h3.800z" fill="#f2f2f2" stroke="#8a8a8a" stroke-width="0.800" stroke-linejoin="round"/>
</svg><div class="app" style="top:65px;letter-spacing:0.23px">Web Browser</div>
<svg class="ic" style="left:6px;top:92px" width="24" height="24" viewBox="0 0 24 24">
<defs><linearGradient id="ml1" x1="0" y1="0" x2="0" y2="1"><stop offset="0" stop-color="#ffffff"/><stop offset="1" stop-color="#e4e4e2"/></linearGradient></defs><g transform="translate(0,-1.5)">
<path d="M2.500 10.200L12 3.600l9.500 6.600v11.300c0 .5-.4.900-.9.900H3.400c-.5 0-.9-.4-.9-.9z" fill="url(#ml1)" stroke="#a4a4a2" stroke-width="1" stroke-linejoin="round"/>
<path d="M5.500 11l11-3.200 2 3.500-6.500 4.700z" fill="#f2f2f0" stroke="#c2c2c0" stroke-width="0.700" stroke-linejoin="round"/>
<path d="M3 10.800l9 6.200 9-6.200" fill="none" stroke="#bcbcba" stroke-width="0.900"/>
<path d="M3.200 21.600l7.300-5.800M20.800 21.600l-7.300-5.800" fill="none" stroke="#cacac8" stroke-width="0.900"/>
</g></svg><div class="app" style="top:91px;letter-spacing:0.2px">Mail Reader</div>
<svg class="ic" style="left:6px;top:118px" width="24" height="24" viewBox="0 0 24 24">
<defs><linearGradient id="fd2" x1="0" y1="0" x2="0" y2="1"><stop offset="0" stop-color="#d6d6d6"/><stop offset="1" stop-color="#b2b2b2"/></linearGradient></defs><g transform="translate(0,-1.3)">
<path d="M2.500 6.200c0-.6.400-1 1-1h6c.6 0 1 .4 1.200 1l.3 1.300h11c.5 0 1 .4 1 1V10H2.500z" fill="#e6e6e6" stroke="#a8a8a8" stroke-width="0.800"/>
<rect x="1.700" y="9.300" width="21.600" height="13" rx="1" fill="url(#fd2)" stroke="#9c9c9c" stroke-width="0.800"/>
<path d="M2.300 10.300h20.400" stroke="#ececec" stroke-width="0.800"/>
<path d="M12.400 12.200l4 3.600h-1.300v3.500h-2v-2.200h-1.500v2.200h-2v-3.500H8.400z" fill="#8f8f8f"/>
</g></svg><div class="app" style="top:117px;letter-spacing:0.21px">File Manager</div>
<svg class="ic" style="left:6px;top:144px" width="24" height="24" viewBox="0 0 24 24">
<rect x="3" y="2.900" width="17.900" height="17.900" fill="#fdfdfd" stroke="#1c6db4" stroke-width="2" stroke-linejoin="round"/>
<path d="M14.600 2h7.200v7.200z" fill="#5fb4ec"/>
<path d="M14.600 2l7.200 7.200h-5.700c-.8 0-1.500-.7-1.500-1.500z" fill="#a4d8f6"/>
<path d="M6 7.500h9M6 9.500h12M6 11.500h12M6 13.500h12M6 15.500h12M6 17.500h12" stroke="#2f8bd6" stroke-width="1"/>
</svg><div class="app" style="top:143px;letter-spacing:0.35px">LibreOffice Writer</div>
<svg class="ic" style="left:6px;top:170px" width="24" height="24" viewBox="0 0 24 24">
<rect x="3" y="2.900" width="17.900" height="17.900" fill="#fdfdfd" stroke="#4c8a36" stroke-width="2" stroke-linejoin="round"/>
<path d="M14.600 2h7.200v7.200z" fill="#7dbb5c"/>
<path d="M14.600 2l7.200 7.200h-5.700c-.8 0-1.500-.7-1.500-1.500z" fill="#b4dc9c"/>
<path d="M7 7.500h2M11 7.500h2M7 9.500h2M11 9.500h2M15 9.500h2M7 11.500h2M11 11.500h2M15 11.500h2M7 13.500h2M11 13.500h2M15 13.500h2M7 15.500h2M11 15.500h2M15 15.500h2M7 17.500h2M11 17.500h2M15 17.500h2" stroke="#6aa84a" stroke-width="1"/>
</svg><div class="app" style="top:169px;letter-spacing:0.16px">LibreOffice Calc</div>
<svg class="ic" style="left:6px;top:196px" width="24" height="24" viewBox="0 0 24 24">
<defs><radialGradient id="pg5" cx="0.45" cy="0.25" r="0.8"><stop offset="0" stop-color="#c77fc6"/><stop offset="0.6" stop-color="#a04e9e"/><stop offset="1" stop-color="#7c357c"/></radialGradient></defs>
<ellipse cx="14" cy="22.300" rx="7" ry="1.100" fill="#000" opacity="0.130"/>
<path d="M12 2.700c6.300 0 11.300 3.500 11.300 8s-5 8-11.300 8c-1.300 0-2.600-.2-3.800-.5L4.800 22.900l.9-5.700C2.800 15.800.7 13.400.7 10.700c0-4.500 5-8 11.300-8z" fill="url(#pg5)" stroke="#7a3379" stroke-width="0.500"/>
<text x="12.100" y="16" text-anchor="middle" font-family="Liberation Sans, DejaVu Sans, sans-serif" font-weight="bold" font-size="15" fill="#fff">!</text>
</svg><div class="app" style="top:195px;letter-spacing:0.32px">Pidgin Internet Messenger</div>
<svg class="ic" style="left:6px;top:222px" width="24" height="24" viewBox="0 0 24 24">
<defs><linearGradient id="sw6" x1="0" y1="0" x2="0" y2="1"><stop offset="0" stop-color="#f4f4f2"/><stop offset="1" stop-color="#fdfdfc"/></linearGradient></defs>
<path d="M3.700 1.900h15.400l1.900 3.900H2z" fill="#b4b4b2" stroke="#9a9a98" stroke-width="0.600" stroke-linejoin="round"/>
<path d="M2.300 5.600h18.400v14.500c0 .4-.3.700-.7.700H3c-.4 0-.7-.3-.7-.7z" fill="url(#sw6)" stroke="#a6a6a4" stroke-width="0.900"/>
<path d="M2.800 20.300h17.500" stroke="#d4d4d2" stroke-width="0.800"/>
<path d="M7.200 8.200c0-5 8.600-5 8.600 0" fill="none" stroke="#a0a09e" stroke-width="1.300"/>
<path d="M5.400 7.300l1.800 2 1.800-2zM14 7.300l1.800 2 1.800-2z" fill="#a0a09e"/>
<circle cx="11.500" cy="13" r="4.600" fill="#6c9ad4" stroke="#5b86bd" stroke-width="0.500"/>
<circle cx="11.500" cy="13" r="3" fill="#86aee0"/>
<rect x="10.100" y="11.600" width="1" height="1" fill="#e8f0fb"/><rect x="11.900" y="11.600" width="1" height="1" fill="#e8f0fb"/><rect x="10.100" y="13.400" width="1" height="1" fill="#e8f0fb"/><rect x="11.900" y="13.400" width="1" height="1" fill="#e8f0fb"/>
</svg><div class="app" style="top:221px;letter-spacing:0.31px">Software</div>
<svg class="ic" style="left:6px;top:248px" width="24" height="24" viewBox="0 0 24 24">
<rect x="2.400" y="2.400" width="19.200" height="19.200" rx="1.600" fill="#2c2c2c" stroke="#1c1c1c" stroke-width="0.900"/>
<rect x="3.900" y="3.900" width="16.200" height="16.200" rx="0.600" fill="none" stroke="#646464" stroke-width="0.800"/>
<text x="4.600" y="11.400" font-family="Liberation Mono, DejaVu Sans Mono, monospace" font-weight="bold" font-size="7.500" fill="#f4f4f4">$</text>
<rect x="10" y="11.400" width="3.800" height="1.100" fill="#f4f4f4"/>
</svg><div class="app" style="top:247px;letter-spacing:0.37px">Terminal Emulator</div>
<svg class="ic" style="left:6px;top:274px" width="24" height="24" viewBox="0 0 24 24">
<defs><linearGradient id="hp8" x1="0" y1="0" x2="0" y2="1"><stop offset="0" stop-color="#49a6f4"/><stop offset="1" stop-color="#1f6fc4"/></linearGradient></defs>
<ellipse cx="12" cy="22.600" rx="7.500" ry="1" fill="#000" opacity="0.120"/>
<circle cx="11.900" cy="11.900" r="10.700" fill="url(#hp8)" stroke="#2a7bd0" stroke-width="0.500"/>
<text x="11.900" y="17.700" text-anchor="middle" font-family="Liberation Sans, DejaVu Sans, sans-serif" font-weight="bold" font-size="16" fill="#fff">?</text>
</svg><div class="app" style="top:273px;letter-spacing:0.47px">Help</div>
<div id="fav"></div><div id="sep"></div>
<svg class="ic" style="left:295px;top:70px" width="16" height="16" viewBox="0 0 16 16">
<defs><linearGradient id="st0" x1="0" y1="0" x2="0" y2="1"><stop offset="0" stop-color="#fcd860"/><stop offset="1" stop-color="#f29a2c"/></linearGradient></defs>
<path d="M8.00 0.80 L10.29 5.34 L15.32 6.12 L11.71 9.71 L12.53 14.73 L8.00 12.40 L3.47 14.73 L4.29 9.71 L0.68 6.12 L5.71 5.34Z" fill="url(#st0)" stroke="#d88c1e" stroke-width="0.900" stroke-linejoin="round"/>
</svg><div class="cat" style="top:64px;letter-spacing:0.09px">Favorites</div>
<svg class="ic" style="left:295px;top:98px" width="16" height="16" viewBox="0 0 16 16">
<circle cx="9.200" cy="8" r="6.100" fill="#f4f4f4" stroke="#1e1e1e" stroke-width="1.400"/>
<path d="M9.200 3.800V8.200l2.600 2.200" fill="none" stroke="#555" stroke-width="1.100"/>
<path d="M.4 7.200h4.200l-2.100 2.900z" fill="#3a3a3a"/>
<path d="M2.300 8a6.900 6.900 0 0 1 1.500-4.200" fill="none" stroke="#d0d0d0" stroke-width="1.200"/>
</svg><div class="cat" style="top:92px;letter-spacing:0.05px">Recently Used</div>
<svg class="ic" style="left:295px;top:127px" width="16" height="16" viewBox="0 0 16 16">
<rect x="1.200" y="1" width="2.600" height="5" fill="#f0d24a" stroke="#c8a820" stroke-width="0.500"/>
<rect x="4.300" y=".6" width="2.400" height="5" fill="#f4dc60" stroke="#c8a820" stroke-width="0.500"/>
<rect x="2.300" y="4.200" width="4" height="3.600" fill="#6a3c98"/>
<rect x="3.100" y="4.900" width=".9" height="1.700" fill="#fff"/><rect x="4.700" y="4.900" width=".9" height="1.700" fill="#fff"/>
<rect x="6.600" y="4.800" width="5" height="3" fill="#74b82c"/>
<rect x="10.300" y="1" width="4" height="5.500" rx="0.500" fill="#f6f6f6" stroke="#c4c4c4" stroke-width="0.500" transform="rotate(8 12 4)"/>
<path d="M.7 7.300h14.600v7.200c0 .4-.3.700-.7.700H1.400c-.4 0-.7-.3-.7-.7z" fill="#c9a97c" stroke="#a98658" stroke-width="0.700"/>
<path d="M1.200 8h13.600" stroke="#dcc29a" stroke-width="0.700"/>
</svg><div class="cat" style="top:121px;letter-spacing:0.03px">All</div>
<svg class="ic" style="left:295px;top:155px" width="16" height="16" viewBox="0 0 16 16">
<path d="M8 2.600c2.200-1.600 4.800-1.900 7.200-.8l-3 3.800z" fill="#f2f2f2" stroke="#909090" stroke-width="0.700" stroke-linejoin="round"/>
<path d="M7.300 3.200l5.200 8.300c.5.800 1.400 1.400 2.600 1.600l-1.300 1.300c-1.200 0-2.400-.6-3-1.600L7 6.500z" fill="#ececec" stroke="#909090" stroke-width="0.700" stroke-linejoin="round"/>
<path d="M7.500 5.600l7.700-1.800-.8 2.600-5.700 1.700z" fill="#f6f6f6" stroke="#9a9a9a" stroke-width="0.700" stroke-linejoin="round"/>
<rect x="1.300" y=".8" width="5.800" height="14.400" rx="2.700" fill="#d41818" stroke="#a80c0c" stroke-width="0.800"/>
<rect x="2.600" y="2.300" width="1.200" height="11.400" rx="0.600" fill="#f06060" opacity="0.700"/>
<path d="M4.200 5.800v3.400M2.500 7.500h3.400" stroke="#fff" stroke-width="1.200"/>
</svg><div class="cat" style="top:149px;letter-spacing:0.14px">Accessories</div>
<svg class="ic" style="left:295px;top:183px" width="16" height="16" viewBox="0 0 16 16">
<path d="M6.500 1.500h8.500v11c0 1-.8 1.500-1.500 1.500H8c-.8 0-1.500-.5-1.500-1.500z" fill="#f2f2f2" stroke="#808080" stroke-width="0.700"/>
<ellipse cx="10.750" cy="1.800" rx="4.250" ry="1" fill="#fcfcfc" stroke="#808080" stroke-width="0.600"/>
<path d="M9.500 6.500l3-1 2 1v4.500l-2 1.500-3-1z" fill="#3a3a3a"/>
<path d="M9.500 6.500l3-1 2 1-2.500 1.300z" fill="#e8862a"/>
<path d="M12 7.800l2.500-1.300v4.500l-2.500 1.500z" fill="#c86414"/>
<path d="M4.500 3.200h2.800v3.300l3.200 5.800c.5 1-.2 2.200-1.400 2.200H2.200c-1.200 0-1.900-1.200-1.400-2.200l3.200-5.800z" fill="#f6f6f6" stroke="#6e6e6e" stroke-width="0.700" stroke-linejoin="round"/>
<path d="M3.200 9.500h5.400l1.300 2.800c.3.700-.1 1.400-.9 1.400H2.800c-.8 0-1.200-.7-.9-1.400z" fill="#58c430"/>
<ellipse cx="5.900" cy="9.600" rx="2.700" ry=".6" fill="#8ae060"/>
</svg><div class="cat" style="top:177px;letter-spacing:0.15px">Education</div>
<svg class="ic" style="left:295px;top:211px" width="16" height="16" viewBox="0 0 16 16">
<path d="M.6 1.200c1.500 1.200 3.500 1.800 4.800 4" fill="none" stroke="#3a3a3a" stroke-width="0.900"/>
<rect x="1.200" y="8.300" width="14" height="7" rx="0.800" fill="#f4f4f4" stroke="#888888" stroke-width="0.800"/>
<path d="M1.600 13.300h13.200" stroke="#c8c8c8" stroke-width="0.700"/>
<rect x="8.800" y="1.300" width="4.400" height="9.400" rx="0.800" fill="#fafafa" stroke="#888888" stroke-width="0.800"/>
<rect x="9.800" y="1.700" width="2.400" height="2.500" fill="#d81c1c"/>
<path d="M4.500 9.300l1.600 1.600-1.600 1.600-1.600-1.600z" fill="#c81414"/>
</svg><div class="cat" style="top:205px;letter-spacing:0.08px">Games</div>
<svg class="ic" style="left:295px;top:239px" width="16" height="16" viewBox="0 0 16 16">
<path d="M6.500 1.800c4.500-1 8.800 1.500 8.800 6 0 4.200-3.500 6.800-7.500 6.800-2.500 0-3.800-1-3.500-2.500.2-1.200 1.500-1.500 1.300-2.700-.2-1.100-1.800-.9-3.300-1.400C.8 7.500.5 6 1.300 4.600c.9-1.500 3-2.300 5.200-2.800z" fill="#f6e8cc" stroke="#c8822a" stroke-width="1.100"/>
<ellipse cx="4.600" cy="5.200" rx="1.900" ry="1.300" fill="#d0d0d0" stroke="#c88a2c" stroke-width="0.700"/>
<circle cx="11.600" cy="5.600" r="1.300" fill="#2c6cc4"/>
<circle cx="11.800" cy="10" r="1.400" fill="#e02020"/>
<circle cx="7.800" cy="11.600" r="1.300" fill="#7ab820"/>
<circle cx="7.800" cy="11.600" r=".6" fill="#e8d020"/>
<path d="M14.800 .5l.9.900-8.700 9-1.300-1.100z" fill="#a0622a" stroke="#6e4018" stroke-width="0.400"/>
<path d="M6.900 10.400L5.700 9.300 3.800 10.800c-1 .8-1.500 2-3.500 2.700 2 .6 4 .3 5.200-1z" fill="#1e1e1e"/>
<path d="M7.600 9.700L6.400 8.600l-.8.700 1.300 1.100z" fill="#c8c8c8"/>
</svg><div class="cat" style="top:233px;letter-spacing:0.1px">Graphics</div>
<svg class="ic" style="left:295px;top:267px" width="16" height="16" viewBox="0 0 16 16">
<defs><radialGradient id="gl7" cx="0.38" cy="0.3" r="0.8"><stop offset="0" stop-color="#5a98dc"/><stop offset="0.55" stop-color="#2a68b0"/><stop offset="1" stop-color="#163f78"/></radialGradient></defs>
<circle cx="7.900" cy="8.100" r="7.600" fill="url(#gl7)" stroke="#1c4884" stroke-width="0.500"/>
<path d="M2 6.200c1.200-.8 2.400-.6 3 .4.500.9 1.700 1.100 1.700 2.300 0 1.100-1.100 1.700-1.100 2.900 0 .8-.4 1.500-1.200 1.500-1-.5-1.100-1.700-1.700-2.600C2.100 9.800 1.200 9 1.400 7.800c0-.7.200-1.200.6-1.600z" fill="#173d70" opacity="0.700"/>
<path d="M8.300 2c1.200-.6 2.900-.3 3.800.8.600.8.200 1.700-.6 1.900-1 .2-1.700.9-2.700.6-.9-.3-1.700-1-1.500-1.900.1-.6.500-1.100 1-1.400z" fill="#173d70" opacity="0.600"/>
<path d="M11.500 7c1-.2 2.200.6 2.500 1.800.3 1.300-.2 2.700-1.100 3.700-.6-.5-.5-1.400-.9-2-.5-.7-1.300-1.100-1.300-1.900 0-.7.300-1.400.8-1.600z" fill="#173d70" opacity="0.600"/>
</svg><div class="cat" style="top:261px;letter-spacing:0.61px">Internet</div>
<svg class="ic" style="left:295px;top:295px" width="16" height="16" viewBox="0 0 16 16">
<rect x=".6" y=".8" width="10.500" height="13.700" fill="#3a3a3a"/>
<rect x="3" y="1.600" width="6" height="5.800" fill="#7aa8cc"/>
<rect x="3" y="8.200" width="6" height="5.600" fill="#6898bc"/>
<path d="M1.300 1.800h1M1.300 3.800h1M1.300 5.800h1M1.300 7.800h1M1.300 9.800h1M1.300 11.800h1M1.300 13.500h1M9.600 1.800h1M9.600 3.800h1M9.600 5.800h1M9.600 7.800h1M9.600 9.800h1M9.600 11.800h1" stroke="#e8e8e8" stroke-width="0.900"/>
<path d="M8 3.200l7-1.500v10.500c0 1.100-1 2-2.200 2s-2-.7-2-1.600 1-1.700 2.200-1.700c.3 0 .6 0 .8.100V4.700l-4.600 1v7.700c0 1.100-1 2-2.200 2s-2-.7-2-1.600 1-1.700 2.200-1.700c.3 0 .6 0 .8.100z" fill="#4a4a4a" stroke="#2c2c2c" stroke-width="0.500"/>
</svg><div class="cat" style="top:289px;letter-spacing:0.46px">Multimedia</div>
<svg class="ic" style="left:295px;top:323px" width="16" height="16" viewBox="0 0 16 16">
<path d="M1 .8l1-.5 6.500 8.200-1.500 1z" fill="#b8b8b8" stroke="#7c7c7c" stroke-width="0.500"/>
<path d="M14.300 .5l1.200.8-5.500 8.700-1.800-.8z" fill="#e8a030" stroke="#b87818" stroke-width="0.500"/>
<path d="M3.200 6.800h10l-.5 7.200c-.1.800-.7 1.400-1.500 1.400H5.200c-.8 0-1.400-.6-1.500-1.400z" fill="#f8f8f8" stroke="#a8a8a8" stroke-width="0.800"/>
<ellipse cx="8.200" cy="6.900" rx="5" ry="1" fill="#e4e4e4" stroke="#a8a8a8" stroke-width="0.600"/>
<circle cx="9" cy="11.500" r="1.600" fill="#a8c0e8" opacity="0.800"/>
<circle cx="6.500" cy="12" r="1" fill="#f0c8a0" opacity="0.800"/>
</svg><div class="cat" style="top:317px;letter-spacing:0.23px">Office</div>
<svg class="ic" style="left:295px;top:351px" width="16" height="16" viewBox="0 0 16 16">
<rect x=".9" y="1.200" width="14.600" height="13.900" rx="0.800" fill="#f6f6f6" stroke="#9a9a9a" stroke-width="0.800"/>
<rect x="3" y="4" width="4" height="8" rx="0.500" fill="#fdfdfd" stroke="#8e8e8e" stroke-width="0.600"/>
<rect x="3.300" y="4.300" width="3.400" height="3.400" fill="#a4a4a4"/>
<rect x="9.300" y="4" width="4" height="8" rx="0.500" fill="#fdfdfd" stroke="#8e8e8e" stroke-width="0.600"/>
<rect x="9.600" y="8.300" width="3.400" height="3.400" fill="#2f84dc"/>
<circle cx="2.200" cy="2.500" r=".4" fill="#8a8a8a"/><circle cx="14.200" cy="2.500" r=".4" fill="#8a8a8a"/><circle cx="2.200" cy="13.800" r=".4" fill="#8a8a8a"/><circle cx="14.200" cy="13.800" r=".4" fill="#8a8a8a"/>
</svg><div class="cat" style="top:345px;letter-spacing:0.13px">Settings</div>
<svg class="ic" style="left:295px;top:379px" width="16" height="16" viewBox="0 0 16 16">
<path d="M6.800.7h2.400l.4 2 1.300.6 1.700-1.200 1.700 1.700-1.200 1.700.6 1.300 2 .4v2.400l-2 .4-.6 1.300 1.200 1.700-1.700 1.700-1.700-1.200-1.300.6-.4 2H6.800l-.4-2-1.300-.6-1.700 1.200-1.700-1.700 1.200-1.700-.6-1.300-2-.4V7.200l2-.4.600-1.300L1.700 3.800l1.700-1.700 1.700 1.200 1.300-.6z" fill="#dedede" stroke="#a6a6a6" stroke-width="0.700" stroke-linejoin="round"/>
<circle cx="8" cy="8.400" r="2.600" fill="#cfcfcf" stroke="#a6a6a6" stroke-width="0.700"/>
<circle cx="8" cy="8.400" r="1.100" fill="#d0d0d0" stroke="#b0b0b0" stroke-width="0.500"/>
</svg><div class="cat" style="top:373px;letter-spacing:0.16px">System</div>

<svg class="ic" style="left:14px;top:491px" width="30" height="30" viewBox="0 0 30 30">
<defs><linearGradient id="av" x1="0" y1="0" x2="0" y2="1"><stop offset="0" stop-color="#4a98ea"/><stop offset="1" stop-color="#2f82dc"/></linearGradient>
<clipPath id="avc"><circle cx="15" cy="15" r="13.400"/></clipPath></defs>
<circle cx="15" cy="15" r="14.200" fill="url(#av)" stroke="#2a72c6" stroke-width="1"/>
<g clip-path="url(#avc)">
<circle cx="15" cy="11.300" r="5.300" fill="#fbfbfb"/>
<ellipse cx="15" cy="23.300" rx="8.600" ry="4.700" fill="#fbfbfb"/>
</g>
</svg>
<div id="user">Live session user</div>
<svg class="ic" style="left:300px;top:494px" width="24" height="24" viewBox="0 0 24 24">
<defs><linearGradient id="sg" x1="0" y1="0" x2="0" y2="1"><stop offset="0" stop-color="#fafafa"/><stop offset="1" stop-color="#e6e6e6"/></linearGradient></defs>
<rect x=".7" y="3.600" width="22.600" height="17.400" rx="1" fill="url(#sg)" stroke="#9a9a9a" stroke-width="0.900"/>
<rect x="4.200" y="7" width="6.300" height="10.600" rx="0.600" fill="#fdfdfd" stroke="#8a8a8a" stroke-width="0.700"/>
<rect x="4.600" y="7.400" width="5.500" height="4" fill="#8c8c8c"/>
<rect x="5.600" y="12.600" width="3.500" height="3.800" fill="#fff" stroke="#cfcfcf" stroke-width="0.500"/>
<rect x="13.300" y="7" width="6.300" height="10.600" rx="0.600" fill="#fdfdfd" stroke="#8a8a8a" stroke-width="0.700"/>
<rect x="13.700" y="13.200" width="5.500" height="4" fill="#2f84dc"/>
<rect x="14.700" y="8.200" width="3.500" height="3.800" fill="#f4f4f4" stroke="#cfcfcf" stroke-width="0.500"/>
<circle cx="2.600" cy="5.500" r=".5" fill="#8a8a8a"/><circle cx="21.400" cy="5.500" r=".5" fill="#8a8a8a"/><circle cx="2.600" cy="19.100" r=".5" fill="#8a8a8a"/><circle cx="21.400" cy="19.100" r=".5" fill="#8a8a8a"/>
</svg>
<svg class="ic" style="left:330px;top:494px" width="24" height="24" viewBox="0 0 24 24">
<defs><linearGradient id="lk" x1="0" y1="0" x2="0" y2="1"><stop offset="0" stop-color="#f6c46c"/><stop offset="1" stop-color="#e8a444"/></linearGradient></defs>
<path d="M7.300 11V7.200c0-2.700 2.100-4.600 4.700-4.600s4.700 1.900 4.700 4.600V11" fill="none" stroke="#a8a8a8" stroke-width="2.800"/>
<path d="M7.300 11V7.200c0-2.700 2.100-4.600 4.700-4.600s4.700 1.900 4.700 4.600V11" fill="none" stroke="#e4e4e4" stroke-width="1.300"/>
<rect x="3.400" y="10.300" width="17.200" height="10.800" rx="1" fill="url(#lk)" stroke="#c88a34" stroke-width="0.800"/>
<path d="M4 13h16M4 15h16M4 17h16M4 19h16" stroke="#f8d48c" stroke-width="0.600" opacity="0.800"/>
</svg>
<svg class="ic" style="left:360px;top:494px" width="24" height="24" viewBox="0 0 24 24">
<circle cx="12" cy="12" r="10.800" fill="#3c3c3c"/>
<path d="M8.200 7.600a6 6 0 1 0 7.600 0" fill="none" stroke="#fafafa" stroke-width="2.100" stroke-linecap="round"/>
<path d="M12 4.800v6.700" stroke="#fafafa" stroke-width="2.100" stroke-linecap="round"/>
</svg>
<svg class="ic" style="left:387px;top:512px" width="10" height="10" viewBox="0 0 10 10"><path d="M10 0V10H0Z" fill="#3a3a3a"/></svg>
<div class="dl" style="top:534px;letter-spacing:0.3px">Install Xubuntu</div>
<div class="dl" style="top:551px;letter-spacing:-0.16px">18.04 LTS</div>
</body></html>
